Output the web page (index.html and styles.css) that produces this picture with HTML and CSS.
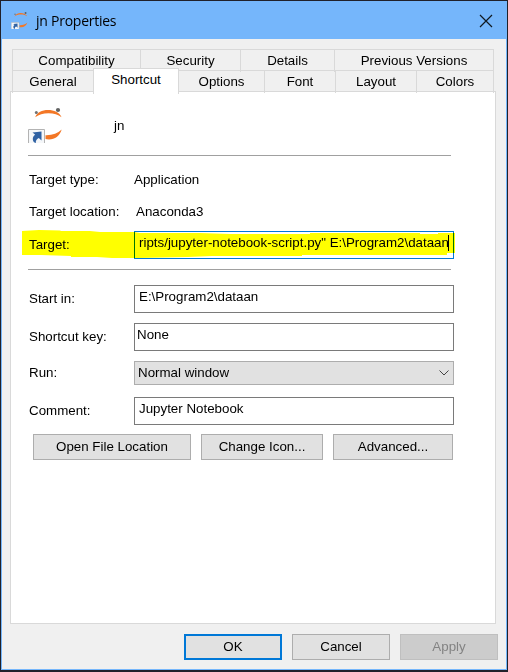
FILE: index.html
```html
<!DOCTYPE html>
<html lang="en"><head><meta charset="utf-8"><title>jn Properties</title><link rel="stylesheet" href="styles.css"></head>
<body>
<svg class="defs" width="0" height="0"><defs>
<symbol id="jupyter" viewBox="0 0 38 40">
<path d="M7.2 14.2C9 9.5 14 7 20 7s11.500 2.500 13.600 7.200C30 11.500 26 10.300 20.500 10.300S11 11.500 7.200 14.200z" fill="#f37726"/>
<path d="M17.500 32.200c7 .2 12-1.600 16.200-5.600-2 6.600-6.700 9.800-12.700 9.800-1.500 0-2.700-.2-3.500-.5z" fill="#f37726"/>
<circle cx="30" cy="7" r="2.100" fill="#616262"/><circle cx="8.300" cy="9.600" r="1.500" fill="#707273"/>
<path d="M.5 26.500h16v15h-16z" fill="#f5f7f9" stroke="#b3b3b3"/>
<path d="M4.500 29.500l9-1v9l-2.700-2.600c-2 1-3.300 2.500-3 5.300C5.800 39.500 4.800 38 4.800 36c0-2 .9-3.300 2.400-4.300z" fill="#2f62a3"/>
</symbol></defs></svg>
<div class="window">
<header class="titlebar"><svg class="app-icon" viewBox="0 4 35 39"><use href="#jupyter" width="38" height="40"/></svg><h1>jn Properties</h1>
<svg class="close" viewBox="0 0 14 14"><path d="M1 1l12 12M13 1L1 13" stroke="#101820" stroke-width="1.200"/></svg></header>
<nav class="tabs">
<div class="tab-row back"><span>Compatibility</span><span>Security</span><span>Details</span><span>Previous Versions</span></div>
<div class="tab-row front"><span>General</span><span class="active">Shortcut</span><span>Options</span><span>Font</span><span>Layout</span><span>Colors</span></div>
</nav>
<main class="page">
<div class="identity"><svg class="big-icon" viewBox="0 4 38 40"><use href="#jupyter" width="38" height="40"/></svg><span>jn</span></div>
<hr>
<div class="info"><span>Target type:</span><span>Application</span></div>
<div class="info location"><span>Target location:</span><span>Anaconda3</span></div>
<div class="field target"><label>Target:</label><div class="box focused"><span class="clip">ripts/jupyter-notebook-script.py" E:\Program2\dataan</span><i class="caret"></i></div>
<svg class="marker" viewBox="22 230 434 30"><path fill="#ff0" d="M22 231l17-1 21 .5 1 .5h29l10 1h34l6 1h60l30 1h80v-1h110v1h18v-1h17v20h-8v2H302v1h-90l-24 1-50 1h-26l-15-1H71v-1l-30-1H22z"/></svg></div>
<hr class="second">
<div class="field start"><label>Start in:</label><div class="box">E:\Program2\dataan</div></div>
<div class="field key"><label>Shortcut key:</label><div class="box">None</div></div>
<div class="field run"><label>Run:</label><div class="box select">Normal window<svg viewBox="0 0 10 6"><path d="M.5 .5L5 5 9.500 .5" fill="none" stroke="#444"/></svg></div></div>
<div class="field comment"><label>Comment:</label><div class="box">Jupyter Notebook</div></div>
<div class="actions"><button>Open File Location</button><button>Change Icon...</button><button>Advanced...</button></div>
</main>
<footer><button class="ok">OK</button><button>Cancel</button><button class="disabled">Apply</button></footer>
</div></body></html>
```
FILE: styles.css
```css
*{box-sizing:border-box}
body{margin:0;background:#20212a;font:13.333px/16px "Liberation Sans",sans-serif;color:#000}
.defs{position:absolute}
.window{margin:1px;width:506px;height:669px;border:1px solid #75b6fb;background:#f0f0f0}
.titlebar{height:37px;background:#75b6fb;display:flex;align-items:center;padding:0 13px 0 9px}
.app-icon{width:17px;height:20px}
h1{font:14px/20px "Open Sans",sans-serif;margin:1px 0 0 8px;flex:1;letter-spacing:-.25px}
.close{width:14px;height:14px}
.tabs{margin:10px 0 0 10px;width:482px}
.tab-row{display:grid;height:21px}
.back{grid-template-columns:128px 100px 94px 160px}
.front{grid-template-columns:81px 86px 85px 71px 81px 78px}
.tab-row span{border:1px solid #d9d9d9;border-width:1px 0 0 1px;text-align:center;line-height:22px}
.tab-row span:last-child{border-right-width:1px}
.tab-row .active{background:#fff;margin:-2px 0 -1px;border-right-width:1px;z-index:1}
.active+span{border-left:0}
.page{margin-left:8px;width:486px;height:533px;border:1px solid #d9d9d9;background:#fff;padding:15px 0 0 17px}
.identity{display:flex;height:48px}
.big-icon{width:38px;height:40px}
.identity span{margin:11px 0 0 48px}
hr{border:0;height:1px;background:#a0a0a0;width:423px;margin:0}
.info{display:grid;grid-template-columns:105px 1fr;padding-left:1px;margin-top:16px}
.location{grid-template-columns:107px 1fr}
.field{display:grid;grid-template-columns:106px 320px;align-items:center}
.field label{padding-left:1px}
.box{height:28px;border:1px solid #7a7a7a;padding:3px 4px;background:#fff;white-space:nowrap}
.target{position:relative;margin-top:11px}
.focused{border-color:#0078d7;display:flex}
.clip{overflow:hidden;width:310px;display:block}
.caret{width:1px;height:16px;background:#000}
.marker{position:absolute;left:-6px;top:-1px;width:434px;height:30px;mix-blend-mode:multiply}
.second{margin:10px 0 15px}
.key{margin-top:10px}.run{margin-top:10px}.comment{margin-top:12px}
.select{height:24px;background:#e1e1e1;border-color:#adadad;display:flex;justify-content:space-between;align-items:center}
.select svg{width:10px;height:6px}
.key .box{padding-left:2px}.select{padding-left:3px}
button{font:inherit;color:inherit;height:26px;background:#e1e1e1;border:1px solid #adadad;padding:0}
.actions{display:grid;grid-template-columns:158px 122px 120px;column-gap:10px;margin:9px 0 0 5px}
footer{display:flex;justify-content:flex-end;gap:10px;padding:10px 8px 0 0}
footer button{width:98px}
.ok{border:2px solid #0078d7}
.disabled{background:#ccc;border-color:#bfbfbf;color:#838383}
```
